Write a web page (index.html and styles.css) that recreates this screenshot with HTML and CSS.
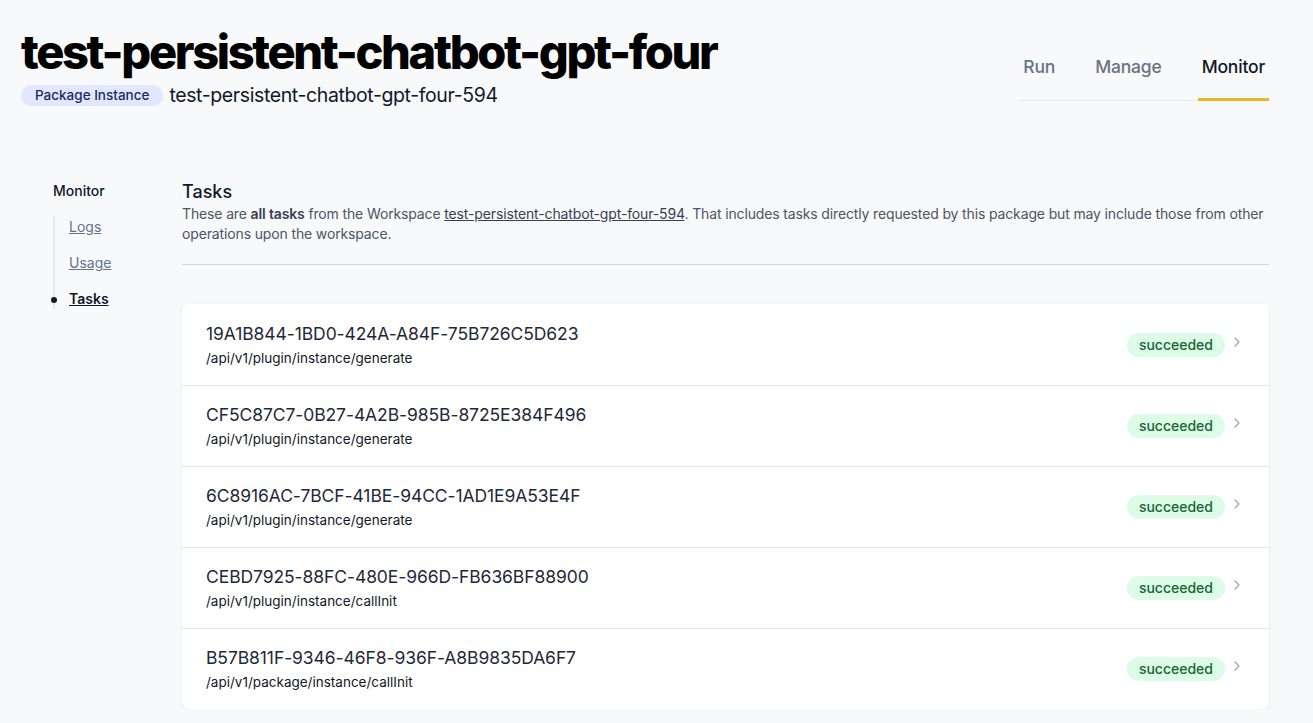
FILE: index.html
```html
<!DOCTYPE html>
<html>
<head>
<meta charset="utf-8">
<link rel="stylesheet" href="styles.css">
</head>
<body>
<div class="page">
  <header class="header">
    <div class="titles">
      <h1 class="title">test-persistent-chatbot-gpt-four</h1>
      <div class="subline">
        <span class="kind">Package Instance</span>
        <span class="handle">test-persistent-chatbot-gpt-four-594</span>
      </div>
    </div>
    <nav class="tabs">
      <a class="tab">Run</a>
      <a class="tab">Manage</a>
      <a class="tab active">Monitor</a>
    </nav>
  </header>
  <div class="body">
    <aside class="side">
      <div class="side-title">Monitor</div>
      <ul class="side-list">
        <li><a class="side-link">Logs</a></li>
        <li><a class="side-link">Usage</a></li>
        <li class="current"><a class="side-link">Tasks</a></li>
      </ul>
    </aside>
    <main class="main">
      <h2 class="section-title">Tasks</h2>
      <p class="section-desc">These are <b>all tasks</b> from the Workspace <a class="ws">test-persistent-chatbot-gpt-four-594</a>. That includes tasks directly requested by this package but may include those from other operations upon the workspace.</p>
      <hr class="divider">
      <ul class="tasks">
        <li class="task">
          <div class="task-info"><div class="task-id">19A1B844-1BD0-424A-A84F-75B726C5D623</div><div class="task-path">/api/v1/plugin/instance/generate</div></div>
          <span class="status">succeeded</span>
          <svg class="chev" viewBox="0 0 20 20"><path d="M7.5 5l5 5-5 5" fill="none" stroke="currentColor" stroke-width="1.5" stroke-linecap="round" stroke-linejoin="round"/></svg>
        </li>
        <li class="task">
          <div class="task-info"><div class="task-id">CF5C87C7-0B27-4A2B-985B-8725E384F496</div><div class="task-path">/api/v1/plugin/instance/generate</div></div>
          <span class="status">succeeded</span>
          <svg class="chev" viewBox="0 0 20 20"><path d="M7.5 5l5 5-5 5" fill="none" stroke="currentColor" stroke-width="1.5" stroke-linecap="round" stroke-linejoin="round"/></svg>
        </li>
        <li class="task">
          <div class="task-info"><div class="task-id">6C8916AC-7BCF-41BE-94CC-1AD1E9A53E4F</div><div class="task-path">/api/v1/plugin/instance/generate</div></div>
          <span class="status">succeeded</span>
          <svg class="chev" viewBox="0 0 20 20"><path d="M7.5 5l5 5-5 5" fill="none" stroke="currentColor" stroke-width="1.5" stroke-linecap="round" stroke-linejoin="round"/></svg>
        </li>
        <li class="task">
          <div class="task-info"><div class="task-id">CEBD7925-88FC-480E-966D-FB636BF88900</div><div class="task-path">/api/v1/plugin/instance/callInit</div></div>
          <span class="status">succeeded</span>
          <svg class="chev" viewBox="0 0 20 20"><path d="M7.5 5l5 5-5 5" fill="none" stroke="currentColor" stroke-width="1.5" stroke-linecap="round" stroke-linejoin="round"/></svg>
        </li>
        <li class="task">
          <div class="task-info"><div class="task-id">B57B811F-9346-46F8-936F-A8B9835DA6F7</div><div class="task-path">/api/v1/package/instance/callInit</div></div>
          <span class="status">succeeded</span>
          <svg class="chev" viewBox="0 0 20 20"><path d="M7.5 5l5 5-5 5" fill="none" stroke="currentColor" stroke-width="1.5" stroke-linecap="round" stroke-linejoin="round"/></svg>
        </li>
      </ul>
    </main>
  </div>
</div>
</body>
</html>
```

FILE: styles.css
```css
* { box-sizing: border-box; }
html, body { margin: 0; padding: 0; background: #f8f9fb; }
body { font-family: Inter, "Noto Sans", sans-serif; color: #111827; }
.page { padding: 24px 44px 0 20px; }
.header { display: flex; justify-content: space-between; align-items: flex-start; }
.title { margin: 0; font-size: 47px; font-weight: 800; letter-spacing: -0.05em; line-height: 56px; color: #000; padding-left: 1px; }
.subline { display: flex; align-items: center; gap: 6px; margin-top: 3px; }
.kind { background: #e0e7ff; color: #1e2a5e; font-size: 13.5px; font-weight: 500; padding: 2px 14px; border-radius: 999px; line-height: 17px; margin-left: 1px; }
.handle { font-size: 19.5px; color: #111827; letter-spacing: -0.02em; }
.tabs { display: flex; gap: 32px; margin-top: 32px; border-bottom: 1px solid #e5e7eb; }
.tab { font-size: 17.5px; font-weight: 500; color: #6b7280; padding: 0 4px 20px; border-bottom: 3px solid transparent; margin-bottom: -1px; line-height: 22px; letter-spacing: -0.01em; }
.tab.active { color: #111827; border-bottom-color: #f0b429; }
.body { display: flex; margin-top: 66px; }
.side { width: 162px; padding-left: 33px; flex: none; padding-top: 8px; }
.side-title { font-size: 14px; font-weight: 500; color: #111827; line-height: 20px; }
.side-list { list-style: none; margin: 16px 0 0 0; padding: 0 0 0 14px; border-left: 2px solid #e5e7eb; }
.side-list li { position: relative; line-height: 20px; font-size: 14px; margin-bottom: 16px; }
.side-list li:last-child { margin-bottom: 0; }
.side-link { font-size: 14px; color: #64748b; text-decoration: underline; }
.current .side-link { color: #111827; font-weight: 600; }
.current::before { content: ""; position: absolute; left: -18px; top: 8px; width: 6px; height: 6px; border-radius: 50%; background: #111827; }
.main { flex: 1; padding-top: 6px; }
.section-title { margin: 0; font-size: 18px; font-weight: 500; line-height: 26px; color: #111827; }
.section-desc { margin: -1px 0 0; font-size: 14px; line-height: 20px; color: #4b5563; letter-spacing: -0.01em; }
.section-desc b { font-weight: 600; color: #374151; }
.ws { color: #374151; text-decoration: underline; }
.divider { border: 0; border-top: 1px solid #d1d5db; margin: 20px 0 39px; }
.tasks { list-style: none; margin: 0; padding: 0; background: #fff; border-radius: 6px; box-shadow: 0 1px 3px rgba(0,0,0,0.08), 0 1px 2px rgba(0,0,0,0.04); }
.task { display: flex; align-items: center; height: 81px; padding: 0 24px 0 24px; border-top: 1px solid #e5e7eb; }
.task:first-child { border-top: 0; }
.task-info { flex: 1; }
.task-id { font-size: 17.5px; color: #1f2937; line-height: 24px; letter-spacing: -0.005em; }
.task-path { font-size: 13.5px; color: #111827; line-height: 20px; margin-top: 2px; }
.status { background: #dcfce7; color: #166534; font-size: 14px; font-weight: 500; padding: 2px 12px; border-radius: 999px; line-height: 20px; }
.chev { width: 16px; height: 16px; color: #9ca3af; margin-left: 4px; margin-top: -6px; }
```
